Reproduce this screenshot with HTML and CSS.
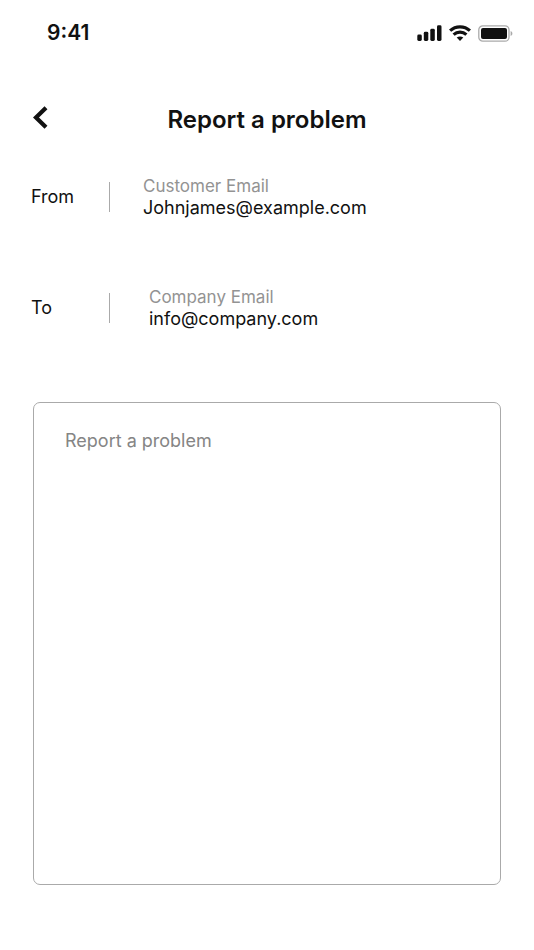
FILE: index.html
```html
<!DOCTYPE html>
<html lang="en">
<head>
    <meta charset="UTF-8">
    <meta name="viewport" content="width=device-width, initial-scale=1.0">
    <title>Report a problem</title>
    <link rel="stylesheet" href="styles.css">
</head>
<body>
    <div class="status-bar">
        <span class="time">9:41</span>
        <div class="status-icons">
            <svg width="25" height="16" viewBox="0 0 25 16" fill="#111">
                <rect x="0.3" y="9.5" width="4.5" height="6.5" rx="1.4"/>
                <rect x="6.8" y="6.8" width="4.5" height="9.2" rx="1.4"/>
                <rect x="13.3" y="3.8" width="4.5" height="12.2" rx="1.4"/>
                <rect x="20" y="0.3" width="4.5" height="15.7" rx="1.4"/>
            </svg>
            <svg width="22" height="16" viewBox="0 0 22 16" fill="none" stroke="#111" stroke-width="3.2">
                <path d="M1.1 5.6C6.7 0.5 15.3 0.5 20.9 5.6"/>
                <path d="M4.6 9.6C8.3 6.3 13.7 6.3 17.4 9.6"/>
                <path d="M7.7 12.6C9.6 11 12.4 11 14.3 12.6L11 16Z" fill="#111" stroke="none"/>
            </svg>
            <svg width="35" height="17" viewBox="0 0 35 17">
                <rect x="0.8" y="0.8" width="30.2" height="15.4" rx="4" fill="none" stroke="#aaa" stroke-width="1.3"/>
                <rect x="3" y="3" width="26" height="11" rx="2" fill="#111"/>
                <path d="M32.6 6V11C35 10 35 7 32.6 6Z" fill="#aaa"/>
            </svg>
        </div>
    </div>

    <header class="header">
        <button type="button" class="back-btn" aria-label="Back">
            <svg width="15" height="23" viewBox="0 0 15 23" fill="none" stroke="#111" stroke-width="4.2">
                <path d="M13 1.8L3 11.5L13 21.2"/>
            </svg>
        </button>
        <h1>Report a problem</h1>
    </header>

    <form class="report-form">
        <div class="form-row">
            <span class="row-title">From</span>
            <div class="field">
                <label for="customerEmail">Customer Email</label>
                <input type="email" id="customerEmail" name="customerEmail" value="Johnjames@example.com">
            </div>
        </div>
        <div class="form-row form-row-to">
            <span class="row-title">To</span>
            <div class="field">
                <label for="companyEmail">Company Email</label>
                <input type="email" id="companyEmail" name="companyEmail" value="info@company.com">
            </div>
        </div>
        <textarea id="message" name="message" placeholder="Report a problem" aria-label="Report a problem"></textarea>
    </form>
</body>
</html>
```

FILE: styles.css
```css
* {
    box-sizing: border-box;
}
body {
    font-family: Inter, "Liberation Sans", sans-serif;
    background-color: #fff;
    color: #111;
    margin: 0;
    min-height: 100vh;
    display: flex;
    flex-direction: column;
}
.status-bar {
    display: flex;
    justify-content: space-between;
    align-items: center;
    padding: 20px 21px 0 47px;
}
.time {
    font-size: 21px;
    line-height: 26px;
    font-weight: 600;
}
.status-icons {
    display: flex;
    align-items: center;
    gap: 7px;
}
.header {
    display: grid;
    grid-template-columns: 15px 1fr 15px;
    align-items: center;
    padding: 0 33px;
    margin-top: 56px;
}
.back-btn {
    display: flex;
    padding: 0 0 5px;
    border: none;
    background: none;
    cursor: pointer;
}
h1 {
    margin: 0;
    font-size: 24px;
    line-height: 36px;
    font-weight: 600;
    text-align: center;
}
.report-form {
    flex: 1;
    display: flex;
    flex-direction: column;
    padding: 38px 33px 65px 31px;
}
.form-row {
    display: flex;
    align-items: center;
    margin-bottom: 69px;
}
.row-title {
    width: 79px;
    height: 30px;
    border-right: 1px solid #aaa;
    font-size: 18px;
    line-height: 30px;
}
.field {
    flex: 1;
    padding-left: 33px;
}
.form-row-to .field {
    padding-left: 39px;
}
label {
    display: block;
    color: #939393;
    font-size: 17px;
    line-height: 21px;
}
input[type="email"] {
    display: block;
    width: 100%;
    height: 21px;
    padding: 0;
    border: none;
    background: none;
    color: #111;
    font-family: inherit;
    font-size: 18px;
    line-height: 21px;
}
textarea {
    flex: 1;
    margin: 4px 0 0 2px;
    padding: 26px 31px;
    border: 1px solid #aaa;
    border-radius: 7px;
    resize: none;
    color: #111;
    font-family: inherit;
    font-size: 18px;
    line-height: 24px;
}
textarea::placeholder {
    color: #858585;
}
```
